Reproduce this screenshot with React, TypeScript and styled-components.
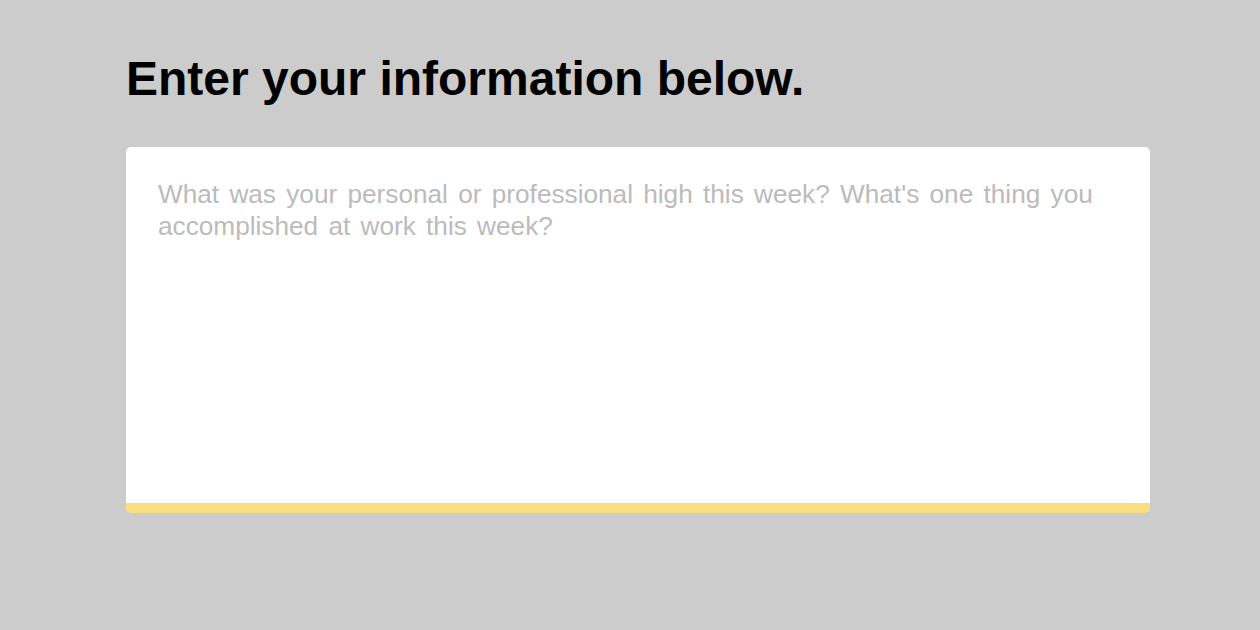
import React from "react";
import styled, { createGlobalStyle } from "styled-components";

const GlobalStyle = createGlobalStyle`
  html, body {
    margin: 0;
    padding: 0;
    background: #cccccc;
    font-family: "Liberation Sans", Arial, Helvetica, sans-serif;
  }
  * { box-sizing: border-box; }
`;

const Page = styled.div`
  min-height: 630px;
  padding: 51px 0 0 16px;
  background: #cccccc;
`;

const Container = styled.main`
  width: 1024px;
  margin: 0 auto;
  display: flex;
  flex-direction: column;
  gap: 40px;
`;

const Heading = styled.h1`
  margin: 0;
  font-size: 48px;
  line-height: 56px;
  font-weight: 700;
  color: #000000;
`;

const Entry = styled.textarea`
  display: block;
  width: 100%;
  height: 366px;
  padding: 31px 32px 29px;
  border: none;
  border-bottom: 10px solid #f9df80;
  border-radius: 5px;
  background: #ffffff;
  font-family: "Liberation Sans", Arial, Helvetica, sans-serif;
  font-size: 26.2px;
  line-height: 32px;
  word-spacing: 3px;
  color: #333333;
  resize: none;
  outline: none;

  &::placeholder {
    color: #bbbbbb;
    opacity: 1;
  }
`;

export default function App() {
  return (
    <>
      <GlobalStyle />
      <Page>
        <Container>
          <Heading>Enter your information below.</Heading>
          <Entry placeholder="What was your personal or professional high this week? What's one thing you accomplished at work this week?" />
        </Container>
      </Page>
    </>
  );
}
